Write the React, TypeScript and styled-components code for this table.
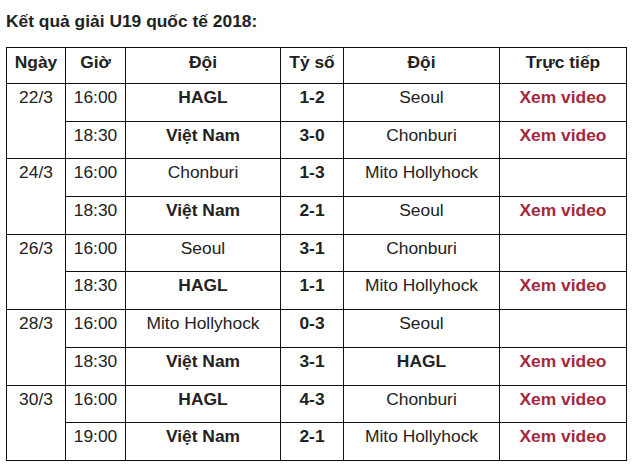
import React from "react";
import styled, { createGlobalStyle } from "styled-components";

const GlobalStyle = createGlobalStyle`
  body {
    margin: 0;
    background: #fff;
    font-family: "Liberation Sans", Arial, sans-serif;
    color: #222;
  }
`;

interface Match {
  time: string;
  home: string;
  score: string;
  away: string;
  video: boolean;
}

interface Day {
  date: string;
  matches: Match[];
}

const LOCAL = ["HAGL", "Việt Nam"];

const days: Day[] = [
  {
    date: "22/3",
    matches: [
      { time: "16:00", home: "HAGL", score: "1-2", away: "Seoul", video: true },
      { time: "18:30", home: "Việt Nam", score: "3-0", away: "Chonburi", video: true },
    ],
  },
  {
    date: "24/3",
    matches: [
      { time: "16:00", home: "Chonburi", score: "1-3", away: "Mito Hollyhock", video: false },
      { time: "18:30", home: "Việt Nam", score: "2-1", away: "Seoul", video: true },
    ],
  },
  {
    date: "26/3",
    matches: [
      { time: "16:00", home: "Seoul", score: "3-1", away: "Chonburi", video: false },
      { time: "18:30", home: "HAGL", score: "1-1", away: "Mito Hollyhock", video: true },
    ],
  },
  {
    date: "28/3",
    matches: [
      { time: "16:00", home: "Mito Hollyhock", score: "0-3", away: "Seoul", video: false },
      { time: "18:30", home: "Việt Nam", score: "3-1", away: "HAGL", video: true },
    ],
  },
  {
    date: "30/3",
    matches: [
      { time: "16:00", home: "HAGL", score: "4-3", away: "Chonburi", video: true },
      { time: "19:00", home: "Việt Nam", score: "2-1", away: "Mito Hollyhock", video: true },
    ],
  },
];

const colWidths = [59, 60, 155, 63, 156, 127];

const Page = styled.div`
  padding: 11px 6px 0 6px;
`;

const Title = styled.h3`
  margin: 0 0 16px 0;
  font-size: 17.4px;
  font-weight: bold;
  color: #222;
  line-height: 20px;
`;

const Table = styled.table`
  border-collapse: collapse;
  table-layout: fixed;
  width: 621px;
`;

const Th = styled.th`
  border: 1px solid #111;
  padding: 4px 0 11px 0;
  height: 20px;
  line-height: 20px;
  font-size: 17.4px;
  font-weight: bold;
  text-align: center;
  vertical-align: top;
  color: #222;
`;

const Td = styled.td<{ $bold?: boolean }>`
  border: 1px solid #111;
  padding: 3px 0 13.7px 0;
  height: 20px;
  line-height: 20px;
  font-size: 17.4px;
  font-weight: ${(p) => (p.$bold ? "bold" : "normal")};
  text-align: center;
  vertical-align: top;
  color: #222;
  white-space: nowrap;
`;

const VideoLink = styled.a`
  color: #a3283d;
  font-weight: bold;
  text-decoration: none;
`;

export default function App() {
  return (
    <Page>
      <GlobalStyle />
      <Title>Kết quả giải U19 quốc tế 2018:</Title>
      <Table>
        <colgroup>
          {colWidths.map((w, i) => (
            <col key={i} style={{ width: w }} />
          ))}
        </colgroup>
        <thead>
          <tr>
            <Th>Ngày</Th>
            <Th>Giờ</Th>
            <Th>Đội</Th>
            <Th>Tỷ số</Th>
            <Th>Đội</Th>
            <Th>Trực tiếp</Th>
          </tr>
        </thead>
        <tbody>
          {days.map((day) =>
            day.matches.map((m, i) => (
              <tr key={day.date + m.time}>
                {i === 0 && <Td rowSpan={day.matches.length}>{day.date}</Td>}
                <Td>{m.time}</Td>
                <Td $bold={LOCAL.includes(m.home)}>{m.home}</Td>
                <Td $bold>{m.score}</Td>
                <Td $bold={LOCAL.includes(m.away)}>{m.away}</Td>
                <Td>{m.video && <VideoLink href="#">Xem video</VideoLink>}</Td>
              </tr>
            )),
          )}
        </tbody>
      </Table>
    </Page>
  );
}
